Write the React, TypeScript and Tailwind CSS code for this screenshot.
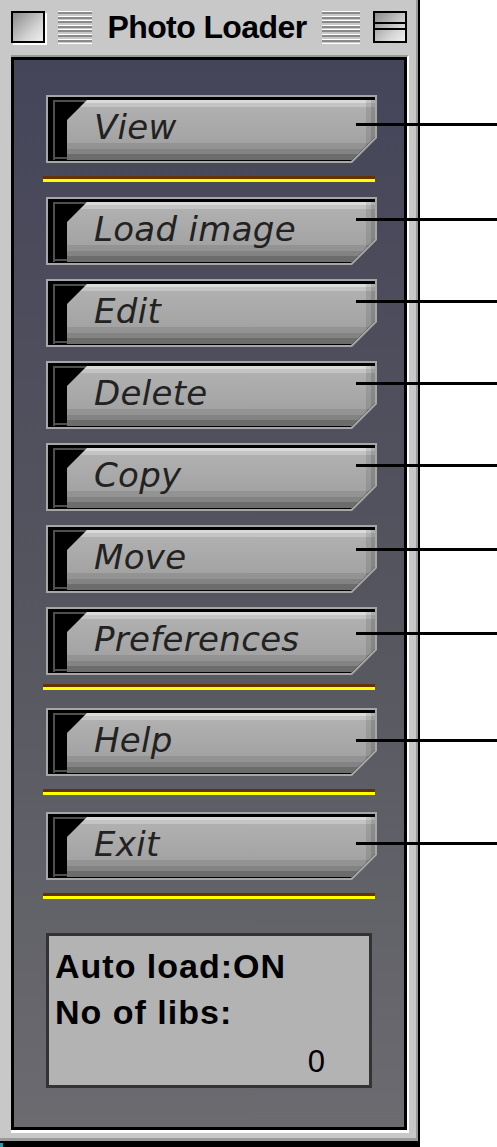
type Item =
  | { kind: "btn"; label: string; mt: string; line: string }
  | { kind: "sep"; mt: string };

const items: Item[] = [
  { kind: "btn", label: "View", mt: "mt-[35px]", line: "top-[28px]" },
  { kind: "sep", mt: "mt-[13px]" },
  { kind: "btn", label: "Load image", mt: "mt-[15px]", line: "top-[21px]" },
  { kind: "btn", label: "Edit", mt: "mt-[14px]", line: "top-[21px]" },
  { kind: "btn", label: "Delete", mt: "mt-[14px]", line: "top-[21px]" },
  { kind: "btn", label: "Copy", mt: "mt-[14px]", line: "top-[21px]" },
  { kind: "btn", label: "Move", mt: "mt-[14px]", line: "top-[23px]" },
  { kind: "btn", label: "Preferences", mt: "mt-[14px]", line: "top-[25px]" },
  { kind: "sep", mt: "mt-[9px]" },
  { kind: "btn", label: "Help", mt: "mt-[18px]", line: "top-[31px]" },
  { kind: "sep", mt: "mt-[13px]" },
  { kind: "btn", label: "Exit", mt: "mt-[17px]", line: "top-[30px]" },
  { kind: "sep", mt: "mt-[13px]" },
];

function Stripes({ w }: { w: string }) {
  return (
    <div
      className={`${w} h-[33px] bg-[repeating-linear-gradient(to_bottom,#ffffff_0px,#ffffff_1px,#8a8a8a_1px,#8a8a8a_3px,#c8c8c8_3px,#c8c8c8_4.6px)]`}
    />
  );
}

function Button({ label, mt, line }: { label: string; mt: string; line: string }) {
  return (
    <div className={`relative ${mt}`}>
      <div className="w-[331px] h-[68px] bg-[#a6a6a6] p-[2px] [clip-path:polygon(0_0,100%_0,100%_calc(100%_-_25px),calc(100%_-_25px)_100%,0_100%)]">
        <div className="h-full bg-black p-[2px] pr-0 pb-[2px] [clip-path:polygon(0_0,100%_0,100%_calc(100%_-_24px),calc(100%_-_24px)_100%,0_100%)]">
          <div className="flex h-full ml-[3px] mt-[1px] border-l-2 border-t-2 border-[#4f4f4f]">
            <div className="w-[12px] border-b-2 border-[#4f4f4f] mb-[1px]" />
            <div className="flex flex-1 items-center -mt-[2px] pl-[27px] pb-[6px] bg-[linear-gradient(to_right,transparent_calc(100%_-_9px),rgba(0,0,0,0.1)_calc(100%_-_9px),rgba(0,0,0,0.1)_calc(100%_-_4px),rgba(0,0,0,0.2)_calc(100%_-_4px)),linear-gradient(to_bottom,#dadada_0px,#dadada_3px,#c4c4c4_3px,#c4c4c4_7px,#b0b0b0_7px,#a8a8a8_50%,#a3a3a3_calc(100%_-_17px),#939393_calc(100%_-_17px),#939393_calc(100%_-_11px),#838383_calc(100%_-_11px),#838383_calc(100%_-_6px),#6c6c6c_calc(100%_-_6px))] [clip-path:polygon(20px_0,100%_0,100%_calc(100%_-_22px),calc(100%_-_22px)_100%,0_100%,0_20px)]">
              <span className="font-['DejaVu_Sans',sans-serif] italic text-[34px] leading-none text-[#222222] tracking-[0.3px]">
                {label}
              </span>
            </div>
          </div>
        </div>
      </div>
      <div className={`absolute left-[310px] w-[141px] h-[3px] bg-black ${line}`} />
    </div>
  );
}

function Separator({ mt }: { mt: string }) {
  return (
    <div className={`${mt} -ml-[3px] w-[332px]`}>
      <div className="h-[3px] bg-[#663300]" />
      <div className="h-[3px] bg-[#ffff00]" />
    </div>
  );
}

export default function App() {
  return (
    <div className="relative w-[497px] h-[1147px] bg-white overflow-hidden">
      <div className="w-[420px] h-[1147px] border-r-2 border-b-[6px] border-black">
        <div className="flex flex-col h-full bg-[#c8c8c8] border-r-2 border-b-[3px] border-[#9a9a9a] pl-[11px] pr-[7px] pb-[5px]">
          {/* title bar */}
          <div className="flex items-center h-[55px] pb-[1px]">
            <div className="w-[34px] h-[32px] border-2 border-black bg-[linear-gradient(135deg,#8c8c8c,#d8d8d8_70%,#eeeeee)] shadow-[2px_2px_0_#ffffff]" />
            <div className="ml-[13px]">
              <Stripes w="w-[34px]" />
            </div>
            <div className="w-[230px] text-center font-['Liberation_Sans',Arial,sans-serif] font-bold text-[32px] leading-none text-black tracking-[-0.6px]">
              Photo Loader
            </div>
            <Stripes w="w-[38px]" />
            <div className="ml-[13px] w-[34px] h-[32px] border-2 border-black bg-[linear-gradient(135deg,#8c8c8c,#d8d8d8_70%,#eeeeee)] flex flex-col">
              <div className="h-[11px] border-b-2 border-black" />
              <div className="h-[6px] border-b-2 border-black" />
            </div>
          </div>
          {/* panel */}
          <div className="flex-1 border-t-2 border-[#9a9a9a] border-r-2 border-r-white border-b-[3px] border-b-white">
            <div className="flex flex-col h-full border-[3px] border-black pl-[32px] bg-[linear-gradient(to_bottom,#45455a,#55555f_50%,#6b6b70)]">
              {items.map((it, i) =>
                it.kind === "btn" ? (
                  <Button key={i} label={it.label} mt={it.mt} line={it.line} />
                ) : (
                  <Separator key={i} mt={it.mt} />
                )
              )}
              <div className="mt-[34px] w-[326px] h-[155px] border-[3px] border-[#333333] bg-[#b3b3b3] pl-[6px] pt-[7px] font-['Liberation_Sans',Arial,sans-serif] text-black">
                <div className="font-bold text-[34px] leading-[46px] tracking-[1px]">Auto load:ON</div>
                <div className="font-bold text-[34px] leading-[46px] tracking-[1px]">No of libs:</div>
                <div className="mt-[4px] text-[31px] leading-[46px] text-right pr-[44px]">0</div>
              </div>
            </div>
          </div>
        </div>
      </div>
      <div className="absolute left-0 bottom-0 w-[3px] h-[4px] bg-[#1a9ab8]" />
    </div>
  );
}
